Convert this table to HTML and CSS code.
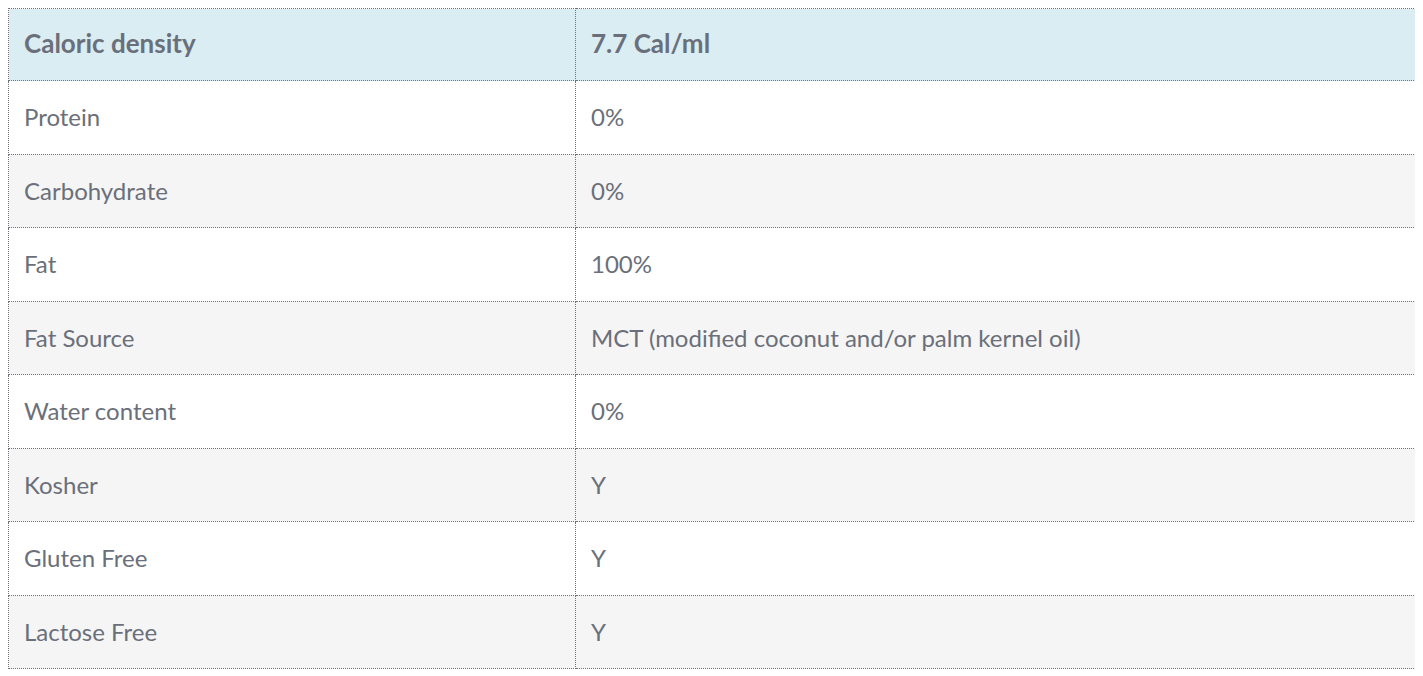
FILE: index.html
```html
<!DOCTYPE html>
<html>
<head>
<meta charset="utf-8">
<link rel="stylesheet" href="styles.css">
</head>
<body>
<table class="spec">
  <tr class="head"><th>Caloric density</th><th>7.7 Cal/ml</th></tr>
  <tr><td>Protein</td><td>0%</td></tr>
  <tr class="alt"><td>Carbohydrate</td><td>0%</td></tr>
  <tr><td>Fat</td><td>100%</td></tr>
  <tr class="alt"><td>Fat Source</td><td>MCT (modified coconut and/or palm kernel oil)</td></tr>
  <tr><td>Water content</td><td>0%</td></tr>
  <tr class="alt"><td>Kosher</td><td>Y</td></tr>
  <tr><td>Gluten Free</td><td>Y</td></tr>
  <tr class="alt"><td>Lactose Free</td><td>Y</td></tr>
</table>
</body>
</html>
```
FILE: styles.css
```css
body {
  margin: 8px;
  background: #ffffff;
  font-family: Lato, "Open Sans", sans-serif;
}
.spec {
  width: 1408px;
  border-collapse: collapse;
  color: #6b6f7a;
  font-size: 24px;
}
.spec th, .spec td {
  border: 1px dotted #6f7278;
  padding: 22px 15px;
  line-height: 28.5px;
  text-align: left;
  vertical-align: middle;
}
.spec th:first-child, .spec td:first-child {
  width: 536px;
}
.spec th {
  font-weight: 700;
  font-size: 26px;
  padding-top: 20px;
  padding-bottom: 22.5px;
}
.spec .head {
  background: #daedf3;
}
.spec .alt {
  background: #f5f5f5;
}
```
